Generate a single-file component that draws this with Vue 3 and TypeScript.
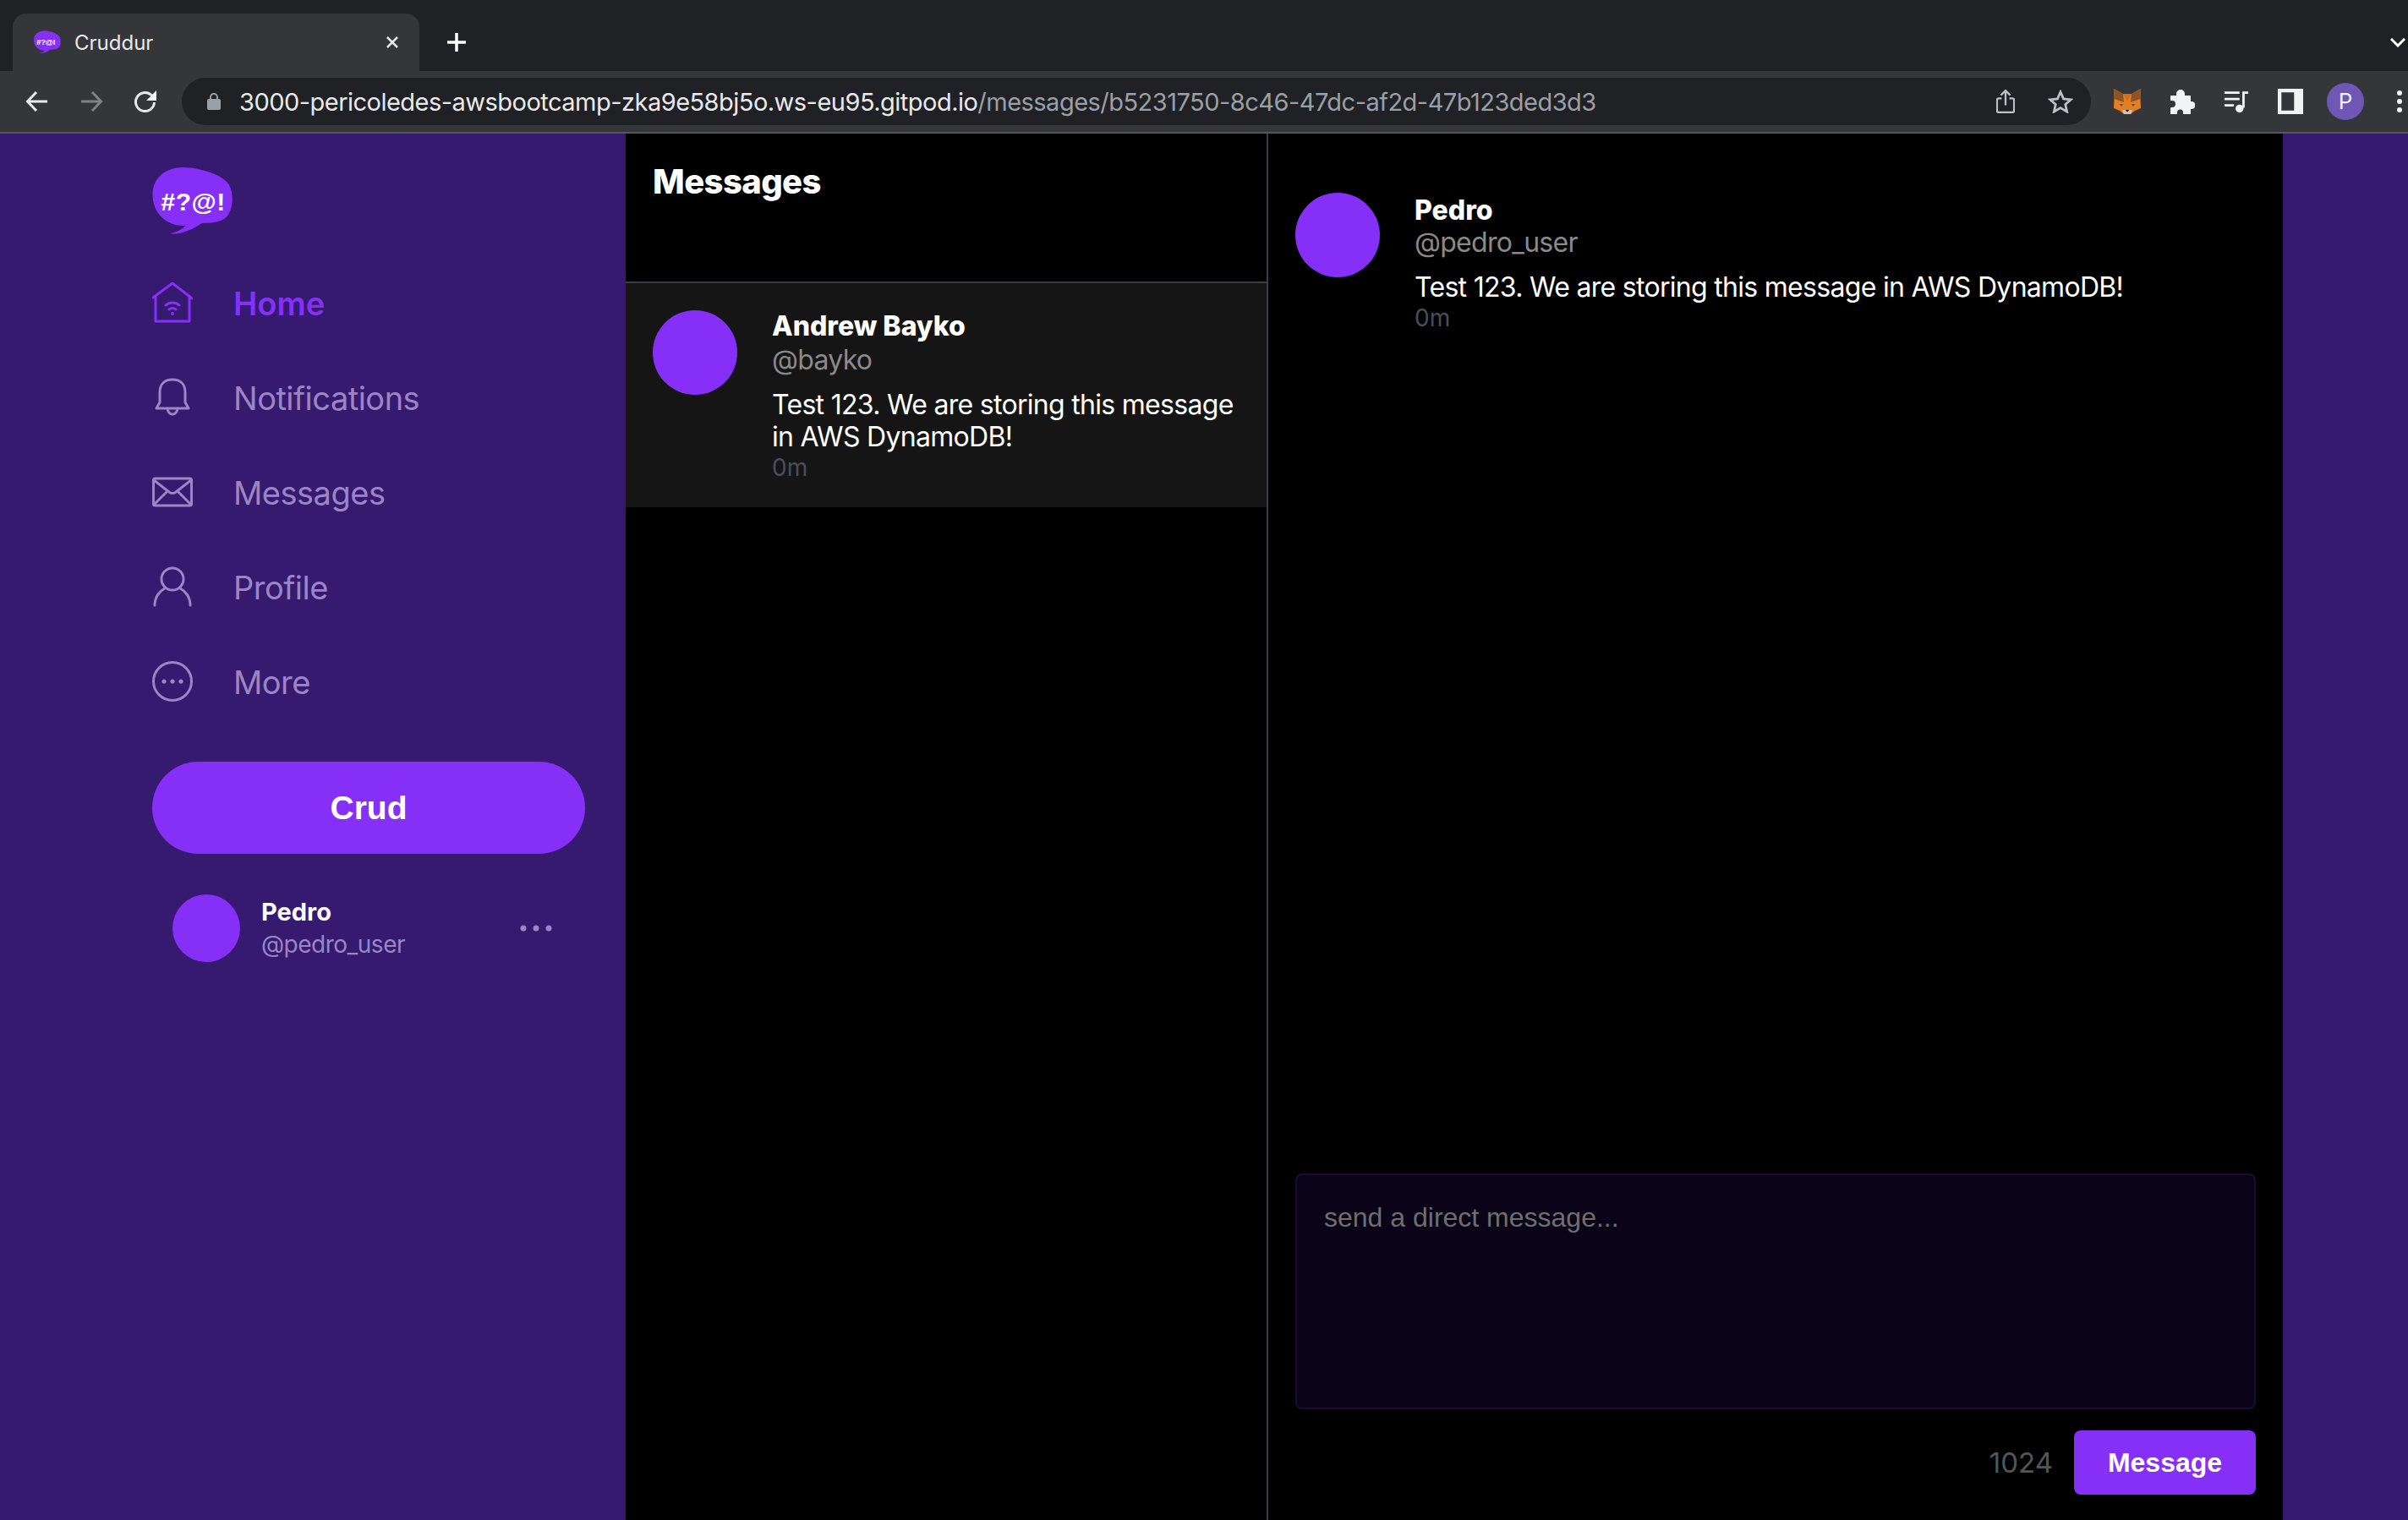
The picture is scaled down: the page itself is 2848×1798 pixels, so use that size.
<template>
  <div class="window">
    <header class="chrome">
      <div class="tab-strip">
        <div class="tab">
          <svg class="favicon" viewBox="0 0 95 80">
            <path d="M0 32C0 12 16 0 36 0c18 0 46 8 54 20 6 10 6 28-2 38-6 7-18 8-30 8C48 74 28 81 21 78c7-1 14-5 18-9C16 70 0 54 0 32Z" fill="#8630f7" />
            <text x="10" y="48">#?@!</text>
          </svg>
          <span class="tab-title">Cruddur</span>
          <svg class="tab-close" viewBox="0 0 16 16">
            <path d="M2 2l12 12M14 2L2 14" />
          </svg>
        </div>
        <svg class="new-tab" viewBox="0 0 24 24">
          <path d="M12 1v22M1 12h22" />
        </svg>
        <svg class="tab-list" viewBox="0 0 18 12">
          <path d="M1 2l8 8 8-8" />
        </svg>
      </div>
      <div class="toolbar">
        <svg class="tool-icon" viewBox="0 0 28 28">
          <path d="M26 14H3M13 3 2.500 14 13 25" />
        </svg>
        <svg class="tool-icon forward" viewBox="0 0 28 28">
          <path d="M2 14h23M15 3l10.500 11L15 25" />
        </svg>
        <svg class="tool-icon" viewBox="0 0 28 28">
          <path d="M24.500 15a11 11 0 1 1-3.500-8.500L25 10" />
          <path class="solid" d="M27 1v12H15Z" />
        </svg>
        <div class="omnibox">
          <svg class="lock" viewBox="0 0 16 20">
            <path d="M4 8V5a4 4 0 0 1 8 0v3" fill="none" stroke="#9aa0a6" stroke-width="2" />
            <rect y="7" width="16" height="13" rx="2" fill="#9aa0a6" />
          </svg>
          <div class="url">
            <span class="host">3000-pericoledes-awsbootcamp-zka9e58bj5o.ws-eu95.gitpod.io</span><span class="path">/messages/b5231750-8c46-47dc-af2d-47b123ded3d3</span>
          </div>
          <svg class="share" viewBox="0 0 24 32">
            <path d="M7 12H3a2 2 0 0 0-2 2v14a2 2 0 0 0 2 2h18a2 2 0 0 0 2-2V14a2 2 0 0 0-2-2h-4M12 21V2M6 8l6-6 6 6" />
          </svg>
          <svg class="star" viewBox="0 0 32 30">
            <path d="M16 3l3.800 8.600 9.400 1-7 6.200 2 9.200-8.200-4.800L7.800 28l2-9.200-7-6.200 9.400-1Z" />
          </svg>
        </div>
        <svg class="ext fox" viewBox="0 0 32 30">
          <path d="M0 0l11 6h10l11-6-.500 10 .500 13-7 3-5 4h-8l-5-4-7-3 .500-13Z" fill="#e2801f" />
          <path d="M0 0l11 6 1 10-11-4ZM32 0 21 6l-1 10 11-4Z" fill="#8e5429" />
          <path d="M11 6h10l-5 9Z" fill="#d9691c" />
          <path d="M10 25h12l-2 5h-8Z" fill="#d7c1b3" />
          <path d="M13.500 25h5L16 27.500Z" fill="#161616" />
          <path d="M7 18l4 .500-2 2ZM25 18l-4 .500 2 2Z" fill="#233447" />
        </svg>
        <svg class="ext" viewBox="0 0 30 30">
          <path class="solid" d="M1 8h7V6a5 5 0 0 1 10 0v2h7v7h1a4.500 4.500 0 0 1 0 9h-1v6H16v-2a3.500 3.500 0 0 0-7 0v2H1v-8h2a4 4 0 0 0 0-8H1Z" />
        </svg>
        <svg class="ext" viewBox="0 0 32 28">
          <path d="M1 3h19M1 11h19M1 19h12" />
          <path d="M25 22V3h6" />
          <circle class="solid" cx="20" cy="23" r="5" />
        </svg>
        <svg class="ext" viewBox="0 0 28 28">
          <path class="solid" fill-rule="evenodd" d="M0 0h28v28H0ZM4 4v20h14V4Z" />
        </svg>
        <div class="chrome-avatar">P</div>
        <svg class="ext kebab" viewBox="0 0 6 26">
          <circle class="solid" cx="3" cy="3" r="3" />
          <circle class="solid" cx="3" cy="13" r="3" />
          <circle class="solid" cx="3" cy="23" r="3" />
        </svg>
      </div>
    </header>

    <div class="app">
      <nav class="sidebar">
        <svg class="logo" viewBox="0 0 95 80">
          <path d="M0 32C0 12 16 0 36 0c18 0 46 8 54 20 6 10 6 28-2 38-6 7-18 8-30 8C48 74 28 81 21 78c7-1 14-5 18-9C16 70 0 54 0 32Z" />
          <text x="10" y="51">#?@!</text>
        </svg>

        <a v-for="item in navItems" :key="item.label" class="nav-item" :class="{ active: item.active }">
          <svg class="nav-icon" viewBox="0 0 48 48">
            <template v-if="item.label === 'Home'">
              <path d="M1 18 24 1l23 18M4 16v30h40V16" />
              <path d="M16 27a12 12 0 0 1 16 0M20 32a6.500 6.500 0 0 1 8 0" />
              <circle class="dot" cx="24" cy="37" r="2" />
            </template>
            <template v-else-if="item.label === 'Notifications'">
              <path d="M9 18C9 8 15 3 24 3s15 5 15 15v12l4 7H5l4-7ZM18 37c0 4 3 7 6 7s6-3 6-7" />
            </template>
            <template v-else-if="item.label === 'Messages'">
              <rect x="1.500" y="8" width="45" height="32" rx="2" />
              <path d="M2 10l18 14c2 2 6 2 8 0l18-14M2 39l15-15M46 39 31 24" />
            </template>
            <template v-else-if="item.label === 'Profile'">
              <circle cx="24" cy="15" r="13" />
              <path d="M3 46c0-10 6-17 12-20M45 46c0-10-6-17-12-20" />
            </template>
            <template v-else>
              <circle cx="24" cy="24" r="22.500" />
              <circle class="dot" cx="14" cy="24" r="2.600" />
              <circle class="dot" cx="24" cy="24" r="2.600" />
              <circle class="dot" cx="34" cy="24" r="2.600" />
            </template>
          </svg>
          <span>{{ item.label }}</span>
        </a>

        <button type="button" class="crud-button">Crud</button>

        <div class="profile-info">
          <div class="avatar small"></div>
          <div class="profile-text">
            <div class="profile-name">Pedro</div>
            <div class="profile-handle">@pedro_user</div>
          </div>
          <svg class="profile-more" viewBox="0 0 38 8">
            <circle cx="4" cy="4" r="3.500" />
            <circle cx="19" cy="4" r="3.500" />
            <circle cx="34" cy="4" r="3.500" />
          </svg>
        </div>
      </nav>

      <section class="message-groups">
        <div class="column-title">Messages</div>
        <article class="message-group">
          <div class="avatar"></div>
          <div class="message-body">
            <div class="display-name">Andrew Bayko</div>
            <div class="handle">@bayko</div>
            <div class="message-text">Test 123. We are storing this message in AWS DynamoDB!</div>
            <div class="time-ago">0m</div>
          </div>
        </article>
      </section>

      <main class="conversation">
        <article class="message-item">
          <div class="avatar"></div>
          <div class="message-body">
            <div class="display-name">Pedro</div>
            <div class="handle">@pedro_user</div>
            <div class="message-text">Test 123. We are storing this message in AWS DynamoDB!</div>
            <div class="time-ago">0m</div>
          </div>
        </article>

        <form class="message-form" @submit.prevent>
          <textarea v-model="draft" placeholder="send a direct message..."></textarea>
          <div class="submit">
            <div class="count">{{ remaining }}</div>
            <button type="submit" class="send">Message</button>
          </div>
        </form>
      </main>
    </div>
  </div>
</template>

<script setup lang="ts">
import { computed, ref } from "vue";

type NavItem = {
  label: string;
  active?: boolean;
};

const navItems: NavItem[] = [
  { label: "Home", active: true },
  { label: "Notifications" },
  { label: "Messages" },
  { label: "Profile" },
  { label: "More" },
];

const draft = ref("");
const remaining = computed(() => 1024 - draft.value.length);
</script>

<style>
html,
body {
  margin: 0;
  background: #000;
}
</style>

<style scoped>
.window {
  width: 2848px;
  height: 1798px;
  display: flex;
  flex-direction: column;
  overflow: hidden;
  font-family: Inter, "Liberation Sans", sans-serif;
  color: #fff;
  background: #351a6f;
}

.chrome {
  height: 158px;
  flex: none;
  background: #202124;
  border-bottom: 2px solid #55565a;
  box-sizing: border-box;
}

.tab-strip {
  height: 84px;
  display: flex;
  align-items: flex-end;
  padding-left: 15px;
  box-sizing: border-box;
}

.tab {
  width: 481px;
  height: 68px;
  box-sizing: border-box;
  display: flex;
  align-items: center;
  padding: 0 24px 0 25px;
  background: #35363a;
  border-radius: 16px 16px 0 0;
}

.favicon {
  width: 32px;
  height: 28px;
  flex: none;
}

.favicon text {
  fill: #fff;
  font-family: "Liberation Sans", sans-serif;
  font-size: 28px;
  font-weight: 700;
  letter-spacing: -1px;
}

.tab-title {
  margin-left: 16px;
  font-size: 24px;
  color: #e8eaed;
  flex: 1;
}

.tab-close {
  width: 16px;
  height: 16px;
  fill: none;
  stroke: #e8eaed;
  stroke-width: 2.500;
}

.new-tab {
  width: 24px;
  height: 24px;
  margin: 0 0 22px 32px;
  fill: none;
  stroke: #fff;
  stroke-width: 3.500;
}

.tab-list {
  width: 18px;
  height: 12px;
  margin: 0 3px 28px auto;
  fill: none;
  stroke: #fff;
  stroke-width: 3;
}

.toolbar {
  height: 72px;
  box-sizing: border-box;
  background: #35363a;
  display: flex;
  align-items: center;
  padding-left: 30px;
}

.tool-icon {
  width: 28px;
  height: 28px;
  flex: none;
  margin-right: 36px;
  fill: none;
  stroke: #e8eaed;
  stroke-width: 3;
}

.tool-icon.forward {
  margin-right: 36px;
  stroke: #808185;
}

.solid {
  fill: #f1f3f4;
  stroke: none;
}

.omnibox {
  width: 2258px;
  height: 56px;
  margin-left: -7px;
  flex: none;
  box-sizing: border-box;
  display: flex;
  align-items: center;
  padding: 0 21px 0 30px;
  border-radius: 28px;
  background: #202124;
}

.lock {
  width: 16px;
  height: 20px;
  flex: none;
}

.url {
  flex: 1;
  margin-left: 22px;
  font-size: 29px;
  letter-spacing: -0.52px;
  white-space: nowrap;
}

.host {
  color: #e8eaed;
}

.path {
  color: #9aa0a6;
}

.share {
  width: 22px;
  height: 30px;
  fill: none;
  stroke: #bdc1c6;
  stroke-width: 2.500;
}

.star {
  width: 30px;
  height: 28px;
  margin-left: 39px;
  fill: none;
  stroke: #bdc1c6;
  stroke-width: 3;
}

.ext {
  width: 30px;
  height: 30px;
  flex: none;
  margin-left: 34px;
  fill: none;
  stroke: #f1f3f4;
  stroke-width: 3;
}

.ext.fox {
  width: 32px;
  margin-left: 27px;
  stroke: none;
}

.chrome-avatar {
  width: 44px;
  height: 44px;
  flex: none;
  margin-left: 28px;
  border-radius: 50%;
  background: #6f57b5;
  color: #f1eefa;
  font-size: 26px;
  line-height: 44px;
  text-align: center;
}

.ext.kebab {
  width: 6px;
  height: 26px;
  margin-left: 39px;
}

.app {
  flex: 1;
  min-height: 0;
  display: grid;
  grid-template-columns: 740px 760px 1200px;
}

.sidebar {
  display: flex;
  flex-direction: column;
  padding: 40px 48px 0 180px;
}

.logo {
  width: 96px;
  height: 80px;
  fill: #8630f7;
  margin-bottom: 25px;
}

.logo text {
  fill: #fff;
  font-family: "Liberation Sans", sans-serif;
  font-size: 30px;
  font-weight: 700;
  letter-spacing: 0.5px;
}

.nav-item {
  height: 112px;
  display: flex;
  align-items: center;
  gap: 48px;
  font-size: 38px;
  letter-spacing: -0.5px;
  color: #9b85c6;
}

.nav-item.active {
  color: #8630f7;
  font-weight: 600;
  letter-spacing: 0;
}

.nav-icon {
  width: 48px;
  height: 48px;
  flex: none;
  margin-bottom: 3px;
  fill: none;
  stroke: currentColor;
  stroke-width: 3;
  stroke-linejoin: round;
  stroke-linecap: round;
}

.dot {
  fill: currentColor;
  stroke: none;
}

.crud-button {
  height: 109px;
  margin-top: 38px;
  border: 0;
  border-radius: 55px;
  background: #8630f7;
  color: #fff;
  font: 700 39px "Liberation Sans", sans-serif;
}

.avatar {
  width: 100px;
  height: 100px;
  flex: none;
  border-radius: 50%;
  background: #8630f7;
}

.avatar.small {
  width: 80px;
  height: 80px;
}

.profile-info {
  display: flex;
  align-items: center;
  margin: 48px 0 0 24px;
}

.profile-text {
  flex: 1;
  margin-left: 25px;
}

.profile-name {
  font-size: 29px;
  font-weight: 700;
  line-height: 38px;
}

.profile-handle {
  font-size: 28px;
  letter-spacing: -0.5px;
  line-height: 38px;
  color: #9b85c6;
}

.profile-more {
  width: 38px;
  height: 8px;
  margin-right: 39px;
  fill: #9b85c6;
}

.message-groups {
  background: #000;
  border-right: 2px solid #3a3b4c;
  box-sizing: border-box;
}

.column-title {
  height: 177px;
  box-sizing: border-box;
  padding: 33px 32px;
  font-size: 40px;
  font-weight: 800;
  letter-spacing: -0.6px;
  line-height: 48px;
  border-bottom: 2px solid #3a3b4c;
}

.message-group {
  display: flex;
  gap: 41px;
  padding: 32px 32px 30px;
  background: #151515;
}

.message-body {
  flex: 1;
  min-width: 0;
}

.display-name {
  font-size: 32px;
  font-weight: 800;
  line-height: 38px;
}

.handle {
  margin-top: 2px;
  font-size: 32px;
  letter-spacing: -0.7px;
  line-height: 38px;
  color: #8a8a8a;
}

.message-text {
  margin-top: 15px;
  font-size: 32px;
  letter-spacing: -0.7px;
  line-height: 38px;
}

.time-ago {
  font-size: 28px;
  line-height: 34px;
  color: #4c4d5b;
}

.conversation {
  display: flex;
  flex-direction: column;
  justify-content: space-between;
  background: #000;
  padding: 70px 32px 30px;
}

.message-item {
  display: flex;
  gap: 41px;
}

.message-item .display-name {
  margin-top: 2px;
}

.message-item .handle {
  margin-top: 0;
}

.message-form {
  display: flex;
  flex-direction: column;
  gap: 25px;
}

textarea {
  display: block;
  height: 279px;
  box-sizing: border-box;
  padding: 32px;
  resize: none;
  outline: none;
  border: 2px solid #1a0b33;
  border-radius: 8px;
  background: #0b0419;
  color: #fff;
  font: 32px "Liberation Sans", sans-serif;
}

textarea::placeholder {
  color: #6f6f6f;
}

.submit {
  display: flex;
  align-items: center;
  justify-content: flex-end;
  gap: 25px;
}

.count {
  font-size: 33px;
  color: #555;
}

.send {
  width: 215px;
  height: 76px;
  border: 0;
  border-radius: 8px;
  background: #8630f7;
  color: #fff;
  font: 700 32px "Liberation Sans", sans-serif;
}
</style>
